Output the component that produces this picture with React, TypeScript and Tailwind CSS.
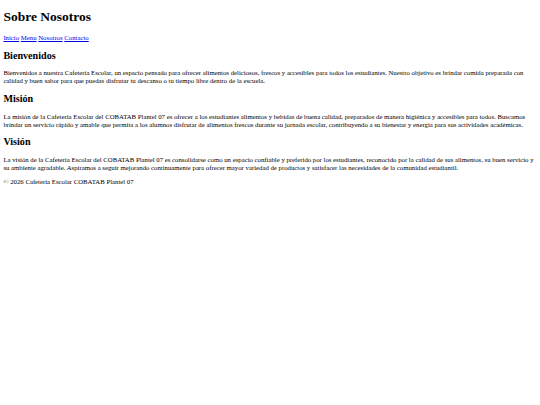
export default function App() {
  return (
    <div className="m-[3.375px] bg-white text-black font-['Liberation_Serif','Times_New_Roman',serif] text-[6.75px] leading-[7.6px]">
      <header>
        <h1 className="text-[13.5px] font-bold leading-[15.5px] my-[9.045px]">Sobre Nosotros</h1>
        <nav>
          <a href="#" className="text-[#0000ee] underline">Inicio</a>{" "}
          <a href="#" className="text-[#0000ee] underline">Menu</a>{" "}
          <a href="#" className="text-[#0000ee] underline">Nosotros</a>{" "}
          <a href="#" className="text-[#0000ee] underline">Contacto</a>
        </nav>
      </header>

      <section>
        <h2 className="text-[10.125px] font-bold leading-[11.5px] my-[8.4px]">Bienvenidos</h2>
        <p className="my-[6.75px]">
          Bienvenidos a nuestra Cafetería Escolar, un espacio pensado para ofrecer alimentos deliciosos, frescos y accesibles para todos los estudiantes. Nuestro objetivo es brindar comida preparada con calidad y buen sabor para que puedas disfrutar tu descanso o tu tiempo libre dentro de la escuela.
        </p>
      </section>

      <section>
        <h2 className="text-[10.125px] font-bold leading-[11.5px] my-[8.4px]">Misión</h2>
        <p className="my-[6.75px]">
          La misión de la Cafetería Escolar del COBATAB Plantel 07 es ofrecer a los estudiantes alimentos y bebidas de buena calidad, preparados de manera higiénica y accesibles para todos. Buscamos brindar un servicio rápido y amable que permita a los alumnos disfrutar de alimentos frescos durante su jornada escolar, contribuyendo a su bienestar y energía para sus actividades académicas.
        </p>
      </section>

      <section>
        <h2 className="text-[10.125px] font-bold leading-[11.5px] my-[8.4px]">Visión</h2>
        <p className="my-[6.75px]">
          La visión de la Cafetería Escolar del COBATAB Plantel 07 es consolidarse como un espacio confiable y preferido por los estudiantes, reconocido por la calidad de sus alimentos, su buen servicio y su ambiente agradable. Aspiramos a seguir mejorando continuamente para ofrecer mayor variedad de productos y satisfacer las necesidades de la comunidad estudiantil.
        </p>
      </section>

      <footer>
        <p className="my-[6.75px]">© 2026 Cafetería Escolar COBATAB Plantel 07</p>
      </footer>
    </div>
  );
}
